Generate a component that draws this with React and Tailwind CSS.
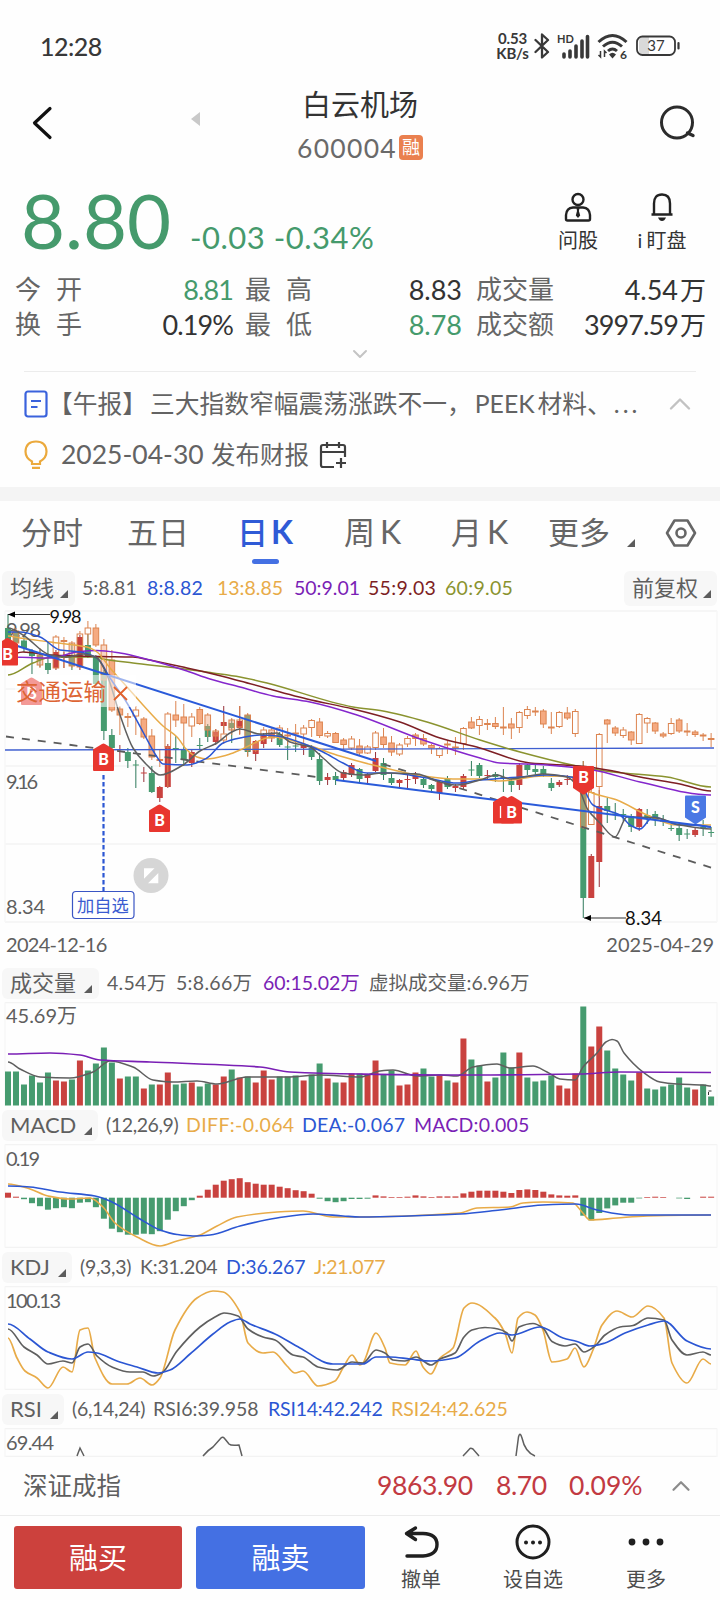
import { ChevronDown, ChevronUp } from 'lucide-react'

const GREEN = '#469b6f'
const RED = '#c9423f'
const PEACH = '#f4a57a'
const PEACH_LINE = '#dc8450'
const GRAY = '#5f5f5f'
const BLUE = '#2b56d3'
const AMBER = '#e8ab48'
const PURPLE = '#7a1fb5'

const candleX = (i) => 8 + i * 7.99

// [high, body top, body bottom, low, up(1) / down(0)]
const candles = [
  [614, 628, 640, 642, 0], [630, 632, 643, 645, 0], [637, 640.5, 648, 652, 0], [649, 651, 656, 674, 0],
  [650, 655, 660, 667, 0], [642, 663, 670, 674, 0], [650, 652, 668, 670, 1], [652, 656, 658, 668, 1],
  [643, 656, 666, 670, 0], [635, 637, 667, 670, 1], [634, 645, 657, 658, 0], [655, 657, 684, 686, 0],
  [670, 672, 731, 740, 0], [729, 735, 748, 749, 0], [745, 749, 750, 762, 1], [748, 752, 761, 768, 0],
  [760, 764.5, 765.5, 788, 0], [767, 772.5, 773.5, 782, 1], [766, 773, 792, 793, 0], [786, 787, 798, 802, 1],
  [744, 746, 787, 788, 1], [736, 748, 749, 763, 0], [745, 749, 760, 766, 0], [750, 752, 763, 767, 1],
  [738, 745, 746, 750, 0], [724, 726, 737, 742, 0], [729, 732, 742, 745, 1], [706, 722, 726, 733, 1],
  [719, 723, 728, 743, 0], [706, 721, 728, 734, 1], [714, 715, 752, 756, 0], [740, 741, 754, 761, 1],
  [733, 735, 744, 748, 1], [732, 734, 738, 742, 1], [732, 734, 745, 747, 0], [739, 746.5, 747.5, 760, 0],
  [737, 745.5, 746.5, 752, 0], [743, 745, 748, 755, 1], [745, 748, 757, 760, 0], [753, 759, 781, 785, 0],
  [773, 777, 780, 785, 1], [772, 776, 780, 785, 0], [770, 772, 778, 781, 1], [763, 765, 775, 777, 1],
  [768, 769, 779, 783, 0], [773, 774, 778, 783, 1], [752, 758, 771, 772, 1], [758, 763, 775, 780, 0],
  [774, 778, 783, 785, 0], [779, 780, 783, 788, 1], [775, 779, 780, 788, 1], [772, 775, 779, 784, 1],
  [777, 779, 785, 788, 0], [784, 785, 789, 793, 0], [780, 782, 793, 800, 1], [776, 779, 787, 789, 0],
  [784, 786, 788, 792, 1], [774, 776, 787, 789, 1], [761, 769.5, 770.5, 776, 0], [763, 765, 776, 778, 0],
  [770, 775, 776, 780, 1], [772, 774, 777, 782, 0], [769, 777, 778, 792, 0], [779, 781, 785, 792, 0],
  [763, 765, 785, 790, 1], [764, 765, 770, 775, 0], [764, 769, 772, 774, 0], [766, 769, 774, 777, 0],
  [778, 783, 788, 791, 0], [780, 782, 785, 787, 1], [775, 779, 780, 785, 1], [774, 777, 780, 784, 1],
  [761, 790, 898, 918, 0], [854, 856, 898, 898, 1], [790, 806, 862, 887, 1], [798, 806, 811, 823, 0],
  [803, 813.5, 814.5, 820, 0], [809, 814, 815, 821, 0], [814, 816, 827, 832, 0], [808, 809, 827, 831, 1],
  [809, 815, 818, 824, 0], [811, 814, 820, 826, 0], [815, 821, 822, 826, 0], [822, 828, 829, 831, 0],
  [826, 828, 835, 841, 0], [829, 833.5, 834.5, 839, 0], [828, 830, 835, 837, 1], [820, 827, 828, 836, 0],
  [827, 832, 833, 837, 0],
]

// index candles drawn over the stock: [i, high, top, bottom, low, hollow]
const overlay = [
  [1, 628, 631, 643, 645, 0], [4, 648, 655, 665, 668, 0], [6, 635, 637, 668, 669, 1], [7, 637, 640.5, 641.5, 668, 0],
  [8, 641, 643, 666, 668, 0], [9, 631, 634, 667, 668, 1], [10, 621, 628, 634, 645, 1], [11, 624, 628, 645, 647, 0],
  [12, 639, 645, 680, 690, 0], [13, 650, 660, 710, 712, 0], [14, 706, 709, 715, 735, 0], [15, 713, 716.5, 717.5, 727, 0],
  [16, 706, 710, 716, 735, 1], [17, 717, 719, 737, 739, 0], [18, 729, 736, 757, 760, 0], [19, 750, 759.5, 760.5, 767, 0],
  [20, 712, 714, 747, 787, 1], [21, 701, 715, 720, 727, 0], [22, 704, 717, 723, 745, 0], [23, 713, 717, 726, 737, 1],
  [24, 707, 709.5, 723.5, 725, 0], [25, 713, 715, 730, 737, 0], [26, 729, 731, 736, 740, 0], [27, 715, 734, 740, 744, 1],
  [28, 718, 720, 730, 735, 0], [29, 706, 720, 727, 735, 1], [30, 713, 715, 750, 757, 0], [31, 740, 743, 750, 752, 0],
  [32, 727, 730, 738, 742, 1], [33, 728, 730, 738, 740, 0], [34, 725, 728, 736, 740, 1], [35, 728, 735, 736, 745, 0],
  [36, 724, 733, 734, 745, 0], [37, 725, 728, 734, 745, 1], [38, 719, 720.5, 727.5, 737, 1], [39, 718, 722, 735.5, 738, 0],
  [40, 731, 733.5, 736, 738, 1], [41, 732, 733.5, 742.5, 743, 0], [42, 738, 740, 744.5, 750, 0], [43, 736, 739, 748, 750, 1],
  [44, 739, 746, 753, 756, 0], [45, 745, 747, 753, 754, 1], [46, 731, 733, 747.5, 750, 1], [47, 728, 737, 744.5, 748, 0],
  [48, 736, 743, 752, 756, 0], [49, 743, 745, 754, 756, 1], [50, 736, 738.5, 744, 747, 1], [51, 733, 735, 738.5, 746, 0],
  [52, 734, 738.5, 744, 746, 0], [53, 744, 745.5, 748, 754, 0], [54, 747, 748.5, 755.5, 758, 1], [55, 741, 744, 745, 754, 0],
  [56, 737, 747, 748, 755, 0], [57, 727, 728.5, 743.5, 750, 1], [58, 717, 722, 728, 729, 0], [59, 716, 719.5, 725.5, 735, 1],
  [60, 719, 723.5, 724.5, 730, 0], [61, 717, 723.5, 726.5, 729, 0], [62, 707, 727, 728, 735, 0], [63, 718, 724, 728, 739, 0],
  [64, 711, 712.5, 727.5, 733, 1], [65, 706, 709.5, 715.5, 719, 1], [66, 707, 711, 712, 716, 0], [67, 709, 711, 724, 728, 0],
  [68, 712, 727, 728, 734, 0], [69, 711, 712.5, 726.5, 728, 1], [70, 707, 713, 718, 720, 0], [71, 709, 711.5, 733.5, 737, 1],
  [72, 761, 790, 827, 829, 0], [73, 785, 792.5, 824.5, 825, 1], [74, 733, 734.5, 786.5, 798, 1], [75, 719, 720, 724, 743, 0],
  [76, 726, 728, 733, 736, 0], [77, 727, 730, 735.5, 738, 1], [78, 731, 732, 740, 745, 0], [79, 713, 714.5, 743.5, 744, 1],
  [80, 717, 718.5, 723, 733, 1], [81, 722, 723, 731, 734, 0], [82, 732, 734, 736, 738, 0], [83, 718, 723.5, 733.5, 735, 1],
  [84, 718, 720, 731, 733, 0], [85, 723, 731, 732, 736, 0], [86, 730, 732, 734.5, 737, 0], [87, 733, 735, 736, 741, 0],
  [88, 733, 738.5, 739.5, 747, 0],
]

// bar heights, negative values are down days
const volumes = [
  -34, -34, -21, -30, -23, -33, 25, 24, -26, 45, -35, -42, -58, -43, 27, -29, -29, 17, -21, 21, 33, -21, -22, 23,
  -19, -22, 21, 29, -36, 28, -29, 23, 35, 26, -29, -29, -30, 25, -31, -42, 27, -23, 23, 32, -32, 31, 45, -31, -35,
  20, 21, 33, -37, -29, 30, -25, 23, 67, -46, -40, 24, -28, -53, -38, 53, -28, -24, -25, -30, 20, 17, 32, -99, 59,
  79, -55, -37, -31, -25, 33, -17, -16, -19, -21, -28, -18, 16, -21, -9,
]

const macd = [
  5, 1, -1.5, -5.5, -8.5, -12, -10.5, -9.5, -10.5, -5, -4.5, -9.5, -21, -31, -34.5, -37, -37, -36, -36.5, -33.5, -22,
  -13.5, -8.5, -2.5, 2, 8, 13, 17, 18.5, 19.5, 15.5, 14, 13, 13, 11, 9.5, 7.5, 6.5, 4, -1, -3.5, -4.5, -3.5, -1.3,
  -1.3, -1, 2.3, 1.3, 0.7, 0.7, 1, 2.3, 1.3, 0.7, 1.3, 1.3, 1.3, 4.3, 6, 7, 7, 7, 6, 4.7, 7.7, 8.3, 7.7, 6, 3.3, 2.3,
  2, 2.3, -18, -22.7, -15.3, -10.7, -7.7, -5, -5, -0.7, 0.7, 1, 0.7, 0, -0.7, -1.3, 0, 1, 1,
]

const ma5 = [[8, 628], [23, 635], [50, 655], [67, 657], [83, 654], [97, 658], [107, 675], [120, 715], [133, 748], [147, 765], [160, 775], [183, 765], [200, 751], [217, 743], [230, 733], [240, 729], [260, 734], [277, 733], [290, 742], [310, 747], [323, 758], [343, 773], [363, 775], [383, 773], [417, 774], [440, 782], [457, 785], [480, 780], [497, 775], [510, 779], [543, 774], [567, 777], [578, 787], [588, 810], [600, 823], [615, 837], [627, 817], [657, 818], [680, 825], [711, 829]]
const ma8 = [[8, 632], [20, 632], [40, 637], [60, 650], [80, 652], [97, 658], [110, 678], [127, 703], [143, 732], [157, 757], [163, 764], [187, 765], [207, 758], [223, 743], [240, 738], [260, 735], [277, 736], [307, 745], [323, 752], [343, 763], [367, 773], [390, 773], [427, 778], [457, 783], [480, 780], [520, 777], [547, 775], [577, 778], [593, 805], [620, 815], [630, 825], [640, 829], [653, 817], [680, 825], [697, 825], [711, 827]]
const ma13 = [[8, 636], [20, 638], [50, 642], [87, 647], [97, 652], [110, 668], [127, 687], [143, 705], [163, 726], [177, 737], [187, 750], [197, 757], [207, 759], [227, 755], [240, 750], [273, 737], [307, 745], [340, 756], [373, 765], [423, 776], [453, 779], [480, 779], [500, 781], [543, 776], [577, 777], [590, 792], [617, 800], [647, 815], [677, 825], [711, 825]]
const ma50 = [[8, 657], [50, 658], [77, 652], [97, 650.5], [120, 653], [150, 660], [187, 671], [210, 679], [240, 687], [273, 696], [310, 702], [357, 715], [423, 740], [480, 758], [500, 763], [547, 765], [593, 770], [640, 782], [711, 795]]
const ma55 = [[8, 655], [23, 652], [50, 655], [100, 656.5], [133, 657], [150, 660], [187, 668], [213, 674], [240, 681], [307, 699], [353, 709], [400, 722], [440, 738], [480, 748], [530, 763], [580, 766], [613, 771], [640, 777], [680, 784], [711, 791]]
const ma60 = [[8, 675], [33, 663], [52, 657], [97, 657], [103, 659], [133, 663], [177, 668], [213, 673], [240, 677], [267, 683], [353, 707], [383, 711], [427, 722], [480, 740], [520, 752], [577, 766], [613, 772], [667, 777], [711, 787]]

const vol5 = [[8, 1062], [20, 1069], [40, 1077], [70, 1078], [93, 1072], [110, 1061], [133, 1067], [153, 1080], [173, 1082], [197, 1081], [217, 1084], [247, 1077], [287, 1077], [320, 1075], [360, 1077], [380, 1071], [393, 1070], [417, 1076], [440, 1075], [457, 1076], [473, 1067], [497, 1064], [510, 1068], [533, 1066], [547, 1072], [560, 1079], [575, 1080], [583, 1067], [597, 1053], [606, 1042], [612, 1039.5], [617, 1041], [624, 1053], [643, 1072], [660, 1082], [677, 1084], [703, 1085], [711, 1086]]
const vol60 = [[8, 1054], [50, 1053], [80, 1055], [100, 1060], [150, 1062], [260, 1067], [290, 1072], [360, 1074], [460, 1075], [490, 1075], [580, 1074], [620, 1072], [711, 1072.5]]

const diff = [[8, 1184], [30, 1189], [48, 1196], [70, 1199], [90, 1198], [103, 1207], [115, 1223], [137, 1237], [160, 1246], [177, 1241], [200, 1235], [217, 1226], [237, 1217], [277, 1212], [303, 1211], [333, 1217], [360, 1217], [460, 1213], [477, 1208], [510, 1207], [523, 1203], [543, 1202], [573, 1203], [582, 1212], [590, 1220], [617, 1218], [647, 1216], [711, 1215]]
const dea = [[8, 1186], [30, 1187], [60, 1192], [95, 1196], [110, 1201], [140, 1219], [160, 1230], [177, 1234.5], [193, 1236], [210, 1235], [240, 1226], [277, 1218], [313, 1214], [343, 1216], [360, 1217], [460, 1214], [500, 1210], [543, 1205], [576, 1204], [597, 1210], [630, 1215], [711, 1215]]

const kLine = [[8, 1329], [24, 1347], [37, 1355], [48, 1364], [63, 1361], [72, 1363], [80, 1347], [88, 1344], [97, 1356], [112, 1367], [130, 1372], [143, 1372], [153, 1376], [162, 1373], [177, 1351], [200, 1327], [215, 1317], [224, 1313], [238, 1316], [248, 1329], [263, 1337], [275, 1340], [293, 1355], [303, 1357], [318, 1367], [337, 1370], [352, 1362], [363, 1363], [376, 1350], [385, 1353], [393, 1360], [405, 1361], [416, 1357], [431, 1365], [440, 1359], [455, 1353], [464, 1337], [472, 1330], [485, 1327.5], [498, 1329], [507, 1333], [512, 1341], [519, 1327], [533, 1323.5], [543, 1328], [552, 1341.5], [565, 1346], [575, 1344], [584, 1352], [595, 1346], [605, 1335], [620, 1327], [633, 1325.5], [648, 1318], [664, 1320], [672, 1340], [687, 1355], [703, 1352], [711, 1355]]
const dLine = [[8, 1324], [30, 1339], [48, 1352], [72, 1359], [88, 1352], [97, 1353], [117, 1361], [137, 1367], [158, 1373], [170, 1370], [190, 1354], [213, 1334], [230, 1322], [240, 1319], [250, 1324], [275, 1334], [300, 1348], [333, 1364], [363, 1364], [376, 1357], [390, 1357], [410, 1359], [431, 1361], [455, 1358], [480, 1341], [500, 1333], [512, 1335], [540, 1327], [563, 1338], [577, 1341.5], [590, 1346], [605, 1343], [625, 1333], [648, 1325], [664, 1321], [687, 1341], [711, 1349]]
const jLine = [[8, 1338], [17, 1358], [25, 1371], [37, 1378], [48, 1388], [63, 1367], [72, 1372], [80, 1330], [88, 1328], [95, 1358], [112, 1384], [127, 1384], [140, 1378], [152, 1385], [160, 1378], [175, 1330], [197, 1298], [213, 1291], [223, 1292], [240, 1312], [248, 1343], [263, 1353], [273, 1352], [287, 1366], [295, 1373], [303, 1371], [318, 1386], [335, 1381], [343, 1368], [352, 1355], [360, 1365], [363, 1363], [376, 1333], [385, 1348], [390, 1363], [405, 1365], [416, 1351], [423, 1367], [431, 1374], [440, 1358], [453, 1348], [464, 1308], [472, 1303], [495, 1318], [505, 1333], [512, 1353], [518, 1318], [527, 1312], [535, 1315], [543, 1330], [552, 1362], [567, 1359], [575, 1348], [584, 1367], [593, 1350], [602, 1325], [617, 1311], [632, 1317], [648, 1306], [664, 1318], [672, 1363], [687, 1383], [703, 1359], [711, 1364]]

// monotone-ish curve: handles stay within each segment
const curve = (pts) => {
  let d = `M${pts[0][0]} ${pts[0][1]}`
  const slope = (i) => {
    if (i === 0 || i === pts.length - 1) return 0
    const a = (pts[i][1] - pts[i - 1][1]) / (pts[i][0] - pts[i - 1][0])
    const b = (pts[i + 1][1] - pts[i][1]) / (pts[i + 1][0] - pts[i][0])
    return a * b <= 0 ? 0 : (2 * a * b) / (a + b)
  }
  for (let i = 1; i < pts.length; i++) {
    const [x0, y0] = pts[i - 1]
    const [x1, y1] = pts[i]
    const h = (x1 - x0) / 3
    d += `C${x0 + h} ${y0 + h * slope(i - 1)} ${x1 - h} ${y1 - h * slope(i)} ${x1} ${y1}`
  }
  return d
}

const Line = ({ pts, color, width = 1.5 }) => (
  <path d={curve(pts)} fill="none" stroke={color} strokeWidth={width} strokeLinejoin="round" />
)

const Grid = ({ top, bottom, lines }) => (
  <g strokeWidth="1.5">
    {lines.map((y) => <path key={y} d={`M5 ${y}H717`} stroke="#f3f3f3" />)}
    <path d={`M5 ${top}V${bottom}M717 ${top}V${bottom}`} stroke="#f7f7f7" />
  </g>
)

const AxisLabel = ({ y, width, children }) => (
  <text x="6" y={y} fontSize="20" fill={GRAY} textLength={width}>{children}</text>
)

const Corner = ({ className = '' }) => (
  <svg viewBox="0 0 8 8" className={`w-2 h-2 shrink-0 ${className}`}>
    <path d="M8 0V8H0Z" fill="#5c5c5c" />
  </svg>
)

const IndicatorButton = ({ children, className }) => (
  <div className={`h-[31px] shrink-0 rounded-md bg-[#f7f7f7] pl-2 pb-[2px] flex items-center text-[#5f5f5f] text-[22px] whitespace-nowrap ${className}`}>
    {children}
  </div>
)

const Value = ({ children, className }) => (
  <span className={`shrink-0 whitespace-nowrap text-[19.5px] ${className}`}>{children}</span>
)

const Pin = ({ x, y, letter, down, color = '#e8362f', opacity = 1 }) => (
  <g transform={`translate(${x} ${y})`} opacity={opacity}>
    <path
      d={down ? 'M-9.500 0H9.500Q10.500 0 10.500 1V22L1.500 28Q0 29 -1.500 28L-10.500 22V1Q-10.500 0 -9.500 0Z' : 'M-10.500 6L-1.500 .5Q0 -.3 1.500 .5L10.500 6V26.500Q10.500 27.500 9.500 27.500H-9.500Q-10.500 27.500 -10.500 26.500Z'}
      fill={color}
    />
    {letter && <text y={down ? 17 : 21.5} textAnchor="middle" fontSize="16" fontWeight="900" fill="#fff">{letter}</text>}
  </g>
)

const StatusBar = () => (
  <div className="h-[80px] pt-[30px] pl-[40px] pr-[40px] flex items-start justify-between text-[#383838]">
    <div className="text-[25px] leading-8 font-medium tracking-[-0.5px]">12:28</div>
    <div className="flex items-center h-8">
      <div className="w-[33px] text-[15px] leading-[15.5px] font-bold whitespace-nowrap text-center tracking-[-0.2px]">
        <div>0.53</div>
        <div>KB/s</div>
      </div>
      <svg viewBox="0 0 16 26" className="ml-[5px] w-4 h-[26px]">
        <path d="M1.500 7L14 19L8 24.500V1.500L14 7L1.500 19" fill="none" stroke="#383838" strokeWidth="2.300" strokeLinejoin="round" strokeLinecap="round" />
      </svg>
      <svg viewBox="0 0 34 28" className="ml-[7px] w-[34px] h-7">
        <text x="0" y="11" fontSize="11" fontWeight="700" fill="#383838">HD</text>
        <path d="M7 25v-3M13 25v-6M19 25v-11M25 25v-16M30.500 25v-20.500" stroke="#383838" strokeWidth="3.600" strokeLinecap="round" />
      </svg>
      <svg viewBox="0 0 32 28" className="ml-[6px] w-8 h-7">
        <g fill="none" stroke="#383838" strokeWidth="3">
          <path d="M1.500 10Q15.500 -3 29.500 10M6 14.500Q15.500 6 25 14.500M11 19Q15.500 15 20 19" />
        </g>
        <path d="M12 22.500Q15.500 19 19 22.500L15.500 26.500Z" fill="#383838" />
        <path d="M3.500 19v6l-2-2M7.500 25v-6l2 2" stroke="#383838" strokeWidth="1.500" fill="none" />
        <text x="23" y="26.500" fontSize="12" fontWeight="700" fill="#383838">6</text>
      </svg>
      <svg viewBox="0 0 44 22" className="ml-[7px] w-11 h-[22px]">
        <path d="M7 2h6v18H7Q3 20 3 15V7Q3 2 7 2Z" fill="#d9d9d9" />
        <rect x="1" y="1.500" width="38" height="18.500" rx="5.500" fill="none" stroke="#383838" strokeWidth="1.800" />
        <path d="M42.500 8v5.500" stroke="#383838" strokeWidth="2.200" strokeLinecap="round" />
        <text x="20" y="16" fontSize="15" textAnchor="middle" fill="#383838">37</text>
      </svg>
    </div>
  </div>
)

const Header = () => (
  <div className="h-[95px] pl-[31px] pr-[23px] flex">
    <svg viewBox="0 0 22 36" className="mt-[25px] w-[22px] h-9">
      <path d="M19 3.500L3.500 18L19 32.500" fill="none" stroke="#111" strokeWidth="3.200" strokeLinecap="round" strokeLinejoin="round" />
    </svg>
    <svg viewBox="0 0 9 14" className="mt-[32px] ml-[138px] w-[9px] h-3.5">
      <path d="M9 0V14L0 7Z" fill="#c9c9c9" />
    </svg>
    <div className="ml-[60px] w-[200px] flex flex-col items-center">
      <div className="mt-[4px] h-[42px] leading-[42px] text-[29px] text-[#333] whitespace-nowrap">白云机场</div>
      <div className="h-11 flex items-center">
        <span className="text-[26.5px] leading-10 tracking-[1.3px] text-[#6a6a6a]">600004</span>
        <span className="ml-[2px] mb-[2px] w-6 h-[25px] rounded-[4px] bg-[#ea804f] text-white text-[18px] leading-[24px] text-center">融</span>
      </div>
    </div>
    <svg viewBox="0 0 38 36" className="ml-auto mt-[25px] w-[38px] h-9">
      <circle cx="18" cy="17.500" r="15.500" fill="none" stroke="#2c2c2c" strokeWidth="3" />
      <path d="M28.500 28L34 30.500" stroke="#2c2c2c" strokeWidth="3.400" strokeLinecap="round" />
    </svg>
  </div>
)

const Quote = () => (
  <div className="h-[95px] pl-[21px] pr-[31px] flex">
    <div className="w-[169px] text-[76px] leading-[90px] text-[#459a6c]">8.80</div>
    <div className="mt-[42px] text-[31px] leading-10 text-[#459a6c] whitespace-nowrap tracking-[0.5px]">-0.03 -0.34%</div>
    <div className="ml-auto mt-[17px] w-[46px] flex flex-col items-center">
      <svg viewBox="0 0 28 30" className="w-7 h-[30px]" fill="none" stroke="#222" strokeWidth="2.400">
        <circle cx="14" cy="7.500" r="5.500" />
        <path d="M9 15.500H19Q25.500 16 26 23V27Q26 28.500 24.500 28.500H3.500Q2 28.500 2 27V23Q2.500 16 9 15.500Z" />
        <path d="M12.500 16h3l-.6 3l1.300 4.500L14 26l-2.200-2.500L13 19Z" fill="#222" stroke="none" />
      </svg>
      <div className="mt-[4px] text-[20px] leading-7 text-[#333] whitespace-nowrap">问股</div>
    </div>
    <div className="ml-[34px] mt-[17px] w-[54px] flex flex-col items-center">
      <svg viewBox="0 0 24 30" className="w-6 h-[30px]" fill="none" stroke="#222" strokeWidth="2.400">
        <path d="M4 22V11.500Q4 2.500 12 2.500T20 11.500V22M1.500 22.500H22.500" />
        <path d="M8 25.500H16Q14.500 29 12 29T8 25.500Z" fill="#222" stroke="none" />
      </svg>
      <div className="mt-[4px] text-[20px] leading-7 text-[#333] whitespace-nowrap"><span className="mr-[4px]">i</span>盯盘</div>
    </div>
  </div>
)

const Stat = ({ label, value, unit, green, tight, className }) => (
  <div className={`flex items-center justify-between shrink-0 ${className}`}>
    <span className="flex text-[#666] text-[26px]">{label}</span>
    <span className={`text-[27px] ${green ? 'text-[#459a6c]' : 'text-[#333]'} ${tight ? 'tracking-[-0.9px]' : ''}`}>
      {value}
      {unit && <span className="text-[26px] ml-[2px] tracking-normal">{unit}</span>}
    </span>
  </div>
)

const Stats = () => (
  <div className="h-[101px] pl-[15px] pt-[2px]">
    <div className="h-[35px] flex items-center leading-[35px]">
      <Stat className="w-[218px]" label={<><span className="mr-[15px]">今</span><span>开</span></>} value="8.81" green tight />
      <Stat className="w-[217px] ml-3" label={<><span className="mr-[15px]">最</span><span>高</span></>} value="8.83" />
      <Stat className="w-[230px] ml-[14px]" label="成交量" value="4.54" unit="万" />
    </div>
    <div className="h-[35px] flex items-center leading-[35px]">
      <Stat className="w-[218px]" label={<><span className="mr-[15px]">换</span><span>手</span></>} value="0.19%" tight />
      <Stat className="w-[217px] ml-3" label={<><span className="mr-[15px]">最</span><span>低</span></>} value="8.78" green />
      <Stat className="w-[230px] ml-[14px]" label="成交额" value="3997.59" unit="万" tight />
    </div>
    <ChevronDown className="ml-[332px] w-[26px] h-6" color="#c4c4c4" strokeWidth={2} />
  </div>
)

const News = () => (
  <div className="mx-6 h-[116px] border-t border-[#ececec] text-[#636363]">
    <div className="h-[65px] pb-[2px] flex items-center">
      <svg viewBox="0 0 24 28" className="w-6 h-7 shrink-0" fill="none" stroke="#3a62dc" strokeWidth="2.200">
        <rect x="1.500" y="1.500" width="21" height="25" rx="2.500" />
        <path d="M7 11h10M7 17h6.500" />
      </svg>
      <div className="w-[600px] text-[24.75px] leading-9 whitespace-nowrap">
        【午报】<span className="ml-[3px]">三大指数窄幅震荡涨跌不一，</span><span className="ml-[3px]">PEEK</span><span className="ml-[3px]">材料、</span><span className="ml-[2px] tracking-[3px]">...</span>
      </div>
      <ChevronUp className="ml-auto -mr-[2px] w-9 h-9 shrink-0" color="#c2c2c2" strokeWidth={1.6} />
    </div>
    <div className="h-[36px] flex items-center">
      <svg viewBox="0 0 24 30" className="w-6 h-[30px]" fill="none" stroke="#eba93c" strokeWidth="2.200">
        <path d="M8 24V21.500Q1.500 18 1.500 11.500Q2 1.500 12 1.500T22.500 11.500Q22.500 18 16 21.500V24ZM8 27.800h8" />
      </svg>
      <span className="ml-[13px] w-[150px] text-[26.5px] whitespace-nowrap">2025-04-30</span>
      <span className="w-[108px] text-[24.5px] whitespace-nowrap">发布财报</span>
      <svg viewBox="0 0 28 28" className="w-7 h-7" fill="none" stroke="#3f3f3f" strokeWidth="2.200">
        <path d="M15 26H4Q2 26 2 24V6Q2 4 4 4H24Q26 4 26 6V16M2 11H26M8 1V7M20 1V7M22 17V27M17 22H27" />
      </svg>
    </div>
  </div>
)

const Tabs = () => (
  <div className="h-[67px] pl-[21px] flex leading-[62px] text-[31px] text-[#666] whitespace-nowrap">
    <div className="w-[106px]">分时</div>
    <div className="w-[111px]">五日</div>
    <div className="w-[54px] flex flex-col items-center text-[#2f5ad6] font-medium h-16">
      <div className="h-[58px] flex gap-[3px]"><span>日</span><span className="font-bold text-[32px]">K</span></div>
      <div className="w-[27px] h-[5px] rounded-full bg-[#4470e3] shrink-0" />
    </div>
    <div className="ml-[52px] w-[107px] flex gap-[5px]"><span>周</span><span className="text-[32px]">K</span></div>
    <div className="w-[97px] flex gap-[5px]"><span>月</span><span className="text-[32px]">K</span></div>
    <div className="w-[79px]">更多</div>
    <Corner className="mt-[38px]" />
    <svg viewBox="0 0 32 30" className="ml-[30px] mt-[17px] w-8 h-[30px]" fill="none" stroke="#666" strokeWidth="2.600">
      <path d="M9.500 2.500H22.500L30 15L22.500 27.500H9.500L2 15Z" strokeLinejoin="round" />
      <circle cx="16" cy="15" r="4.500" />
    </svg>
  </div>
)

const PriceChart = () => (
  <>
    <div className="h-[40px] pl-[2px] pr-[3px] flex items-center">
      <IndicatorButton className="w-[73px] h-[35px]">均线<Corner className="mt-[14px] ml-[6px]" /></IndicatorButton>
      <Value className="ml-[7px] w-[65px] text-[#5f5f5f]">5:8.81</Value>
      <Value className="w-[70px] text-[#2b56d3] tracking-[0.2px]">8:8.82</Value>
      <Value className="w-[77px] text-[#e8ab48]">13:8.85</Value>
      <Value className="w-[74px] text-[#7a1fb5]">50:9.01</Value>
      <Value className="w-[77px] text-[#7d1f24] tracking-[0.3px]">55:9.03</Value>
      <Value className="w-[70px] text-[#8a932f] tracking-[0.3px]">60:9.05</Value>
      <IndicatorButton className="ml-auto w-[93px] h-[35px]">前复权<Corner className="mt-[14px] ml-[5px]" /></IndicatorButton>
    </div>
    <svg viewBox="0 608 720 318" className="block w-[720px] h-[318px]">
      <Grid top={611} bottom={922} lines={[611, 689, 766, 844, 922]} />
      <AxisLabel y={636.5} width={35}>9.98</AxisLabel>
      <AxisLabel y={788.5} width={32}>9.16</AxisLabel>
      <AxisLabel y={913.5} width={39}>8.34</AxisLabel>
      {candles.map(([high, top, bottom, low, up], i) => (
        <g key={i}>
          <path d={`M${candleX(i)} ${high}V${low}`} stroke={up ? '#963039' : '#2f7a5c'} strokeWidth="1" />
          <rect x={candleX(i) - 3} y={top} width="6" height={bottom - top} fill={up ? RED : GREEN} />
        </g>
      ))}
      {overlay.map(([i, high, top, bottom, low, hollow]) => (
        <g key={i} stroke={PEACH_LINE} strokeWidth="1">
          <path d={`M${candleX(i)} ${high}V${top}M${candleX(i)} ${bottom}V${low}`} />
          <rect x={candleX(i) - 2.8} y={top} width="5.600" height={bottom - top} fill={hollow ? 'none' : PEACH} fillOpacity={candles[i][1] < bottom ? 0.45 : 0.95} />
        </g>
      ))}
      <path d="M5 750L714 748" stroke="#3f5fd0" strokeWidth="1.300" />
      <path d="M6 736.500L317 777M383 764L717 869.500" stroke="#5c5c5c" strokeWidth="1.800" strokeDasharray="8 8" />
      <Line pts={ma60} color="#8a932f" />
      <Line pts={ma55} color="#7d1f24" />
      <Line pts={ma50} color="#8426cc" />
      <Line pts={ma13} color={AMBER} />
      <Line pts={ma8} color={BLUE} />
      <Line pts={ma5} color={GRAY} />
      <path d="M8 643L376 761M336 780L711 827" stroke="#2a5ad9" strokeWidth="2" />

      <path d="M8 614.500H50M584 918H626" stroke="#333" strokeWidth="1" />
      <path d="M8 614.500L15 611.500V617.500ZM584 918L591 915V921Z" fill="#000" />
      <text x="49.500" y="623" fontSize="18" fill="#111" textLength="32">9.98</text>
      <text x="625" y="925" fontSize="18.500" fill="#111" textLength="37">8.34</text>

      <rect x="15" y="675" width="121" height="32" fill="#fff" opacity=".55" />
      <Pin x={31.5} y={677.5} letter="B" opacity={0.5} />
      <text x="16" y="700" fontSize="22.500" fill="#dd6434">交通运输</text>
      <path d="M114 687L127 700M127 687L114 700" stroke="#e2622d" strokeWidth="1.800" />

      <svg x="2" y="608" width="718" height="318" viewBox="2 608 718 318">
        <Pin x={7.5} y={638} letter="B" />
      </svg>
      <Pin x={103.5} y={743.5} letter="B" />
      <Pin x={159.5} y={804.5} letter="B" />
      <Pin x={503.5} y={796} />
      <Pin x={511.5} y={796} letter="B" />
      <path d="M500.500 806V818" stroke="#fff" strokeWidth="1.300" />
      <Pin x={583.5} y={766} letter="B" down />
      <Pin x={695.5} y={795.5} letter="S" down color="#4a78e4" />

      <path d="M103.500 775V891" stroke="#2b56d3" strokeWidth="2.200" strokeDasharray="4.500 2.500" />
      <rect x="72.500" y="891.500" width="61.500" height="27" rx="3.500" fill="#fff" stroke="#3a55c4" strokeWidth="1.200" />
      <text x="77" y="911.500" fontSize="17.300" fill="#3a5bd0">加自选</text>
      <circle cx="151" cy="875.500" r="17.500" fill="#d6d6d6" />
      <path d="M144 868.300H154.500L144 878.800ZM158.300 873V883.300H148Z" fill="#fff" />
    </svg>
    <div className="h-[38px] pb-[3px] px-[6px] flex items-center justify-between text-[20px] text-[#5f5f5f]">
      <span className="tracking-[-0.7px]">2024-12-16</span>
      <span>2025-04-29</span>
    </div>
  </>
)

const Volume = () => (
  <>
    <div className="h-[38px] pt-[4px] pl-[2px] flex items-start leading-[29px]">
      <IndicatorButton className="w-[97px]">成交量<Corner className="mt-[13px] ml-[8px]" /></IndicatorButton>
      <Value className="ml-[8px] w-[69px] text-[#5f5f5f] tracking-[0.3px]">4.54万</Value>
      <Value className="w-[87px] text-[#5f5f5f] tracking-[0.3px]">5:8.66万</Value>
      <Value className="w-[106px] text-[#7a1fb5]">60:15.02万</Value>
      <Value className="text-[#5f5f5f]">虚拟成交量:6.96万</Value>
    </div>
    <svg viewBox="0 1002 720 104" className="block w-[720px] h-[104px]">
      <Grid top={1002.5} bottom={1106} lines={[1002.5]} />
      <AxisLabel y={1023} width={71}>45.69万</AxisLabel>
      {volumes.map((v, i) => (
        <rect key={i} x={candleX(i) - 3} y={1105.5 - Math.abs(v)} width="6" height={Math.abs(v)} fill={v > 0 ? RED : GREEN} />
      ))}
      <Line pts={vol5} color={GRAY} />
      <Line pts={vol60} color={PURPLE} width={1.7} />
      <path d="M708.500 1091h4M708.500 1092v5" stroke="#333" strokeWidth="1" strokeDasharray="3 2" />
    </svg>
  </>
)

const Macd = () => (
  <>
    <div className="h-[38px] pt-[4px] pl-[2px] flex items-start leading-[29px]">
      <IndicatorButton className="w-[96px]">MACD<Corner className="mt-[13px] ml-[8px]" /></IndicatorButton>
      <Value className="ml-[8px] w-[80px] text-[#5f5f5f] tracking-[-0.4px]">(12,26,9)</Value>
      <Value className="w-[116px] text-[#e8ab48] tracking-[0.4px]">DIFF:-0.064</Value>
      <Value className="w-[112px] text-[#2b56d3] tracking-[0.2px]">DEA:-0.067</Value>
      <Value className="text-[#7a1fb5] tracking-[0.2px]">MACD:0.005</Value>
    </div>
    <svg viewBox="0 1144 720 104" className="block w-[720px] h-[104px]">
      <Grid top={1144.5} bottom={1247.5} lines={[1144.5, 1247.5]} />
      <AxisLabel y={1165.5} width={34}>0.19</AxisLabel>
      {macd.map((v, i) => (
        <rect key={i} x={candleX(i) - 3} y={v > 0 ? 1197.7 - v : 1197.7} width="6" height={Math.abs(v)} fill={v > 0 ? RED : GREEN} />
      ))}
      <Line pts={diff} color={AMBER} width={1.6} />
      <Line pts={dea} color={BLUE} width={1.6} />
    </svg>
  </>
)

const Kdj = () => (
  <>
    <div className="h-[38px] pt-[4px] pl-[2px] flex items-start leading-[29px]">
      <IndicatorButton className="w-[70px]">KDJ<Corner className="mt-[13px] ml-[8px]" /></IndicatorButton>
      <Value className="ml-[8px] w-[60px] text-[#5f5f5f] tracking-[-0.3px]">(9,3,3)</Value>
      <Value className="w-[86px] text-[#5f5f5f] tracking-[-0.2px]">K:31.204</Value>
      <Value className="w-[88px] text-[#2b56d3] tracking-[-0.2px]">D:36.267</Value>
      <Value className="text-[#e8ab48] tracking-[-0.4px]">J:21.077</Value>
    </div>
    <svg viewBox="0 1286 720 104" className="block w-[720px] h-[104px]">
      <Grid top={1286.5} bottom={1389.5} lines={[1286.5, 1389.5]} />
      <AxisLabel y={1308} width={55}>100.13</AxisLabel>
      <Line pts={jLine} color={AMBER} width={1.7} />
      <Line pts={kLine} color={GRAY} width={1.7} />
      <Line pts={dLine} color={BLUE} width={1.7} />
    </svg>
  </>
)

const Rsi = () => (
  <>
    <div className="h-[38px] pt-[4px] pl-[2px] flex items-start leading-[29px]">
      <IndicatorButton className="w-[62px]">RSI<Corner className="mt-[13px] ml-[8px]" /></IndicatorButton>
      <Value className="ml-[8px] w-[81px] text-[#5f5f5f] tracking-[-0.3px]">(6,14,24)</Value>
      <Value className="w-[115px] text-[#5f5f5f]">RSI6:39.958</Value>
      <Value className="w-[123px] text-[#2b56d3] tracking-[-0.2px]">RSI14:42.242</Value>
      <Value className="text-[#e8ab48]">RSI24:42.625</Value>
    </div>
    <svg viewBox="0 1428 720 29" className="block w-[720px] h-[29px]">
      <Grid top={1428.5} bottom={1457} lines={[1428.5, 1456.5]} />
      <AxisLabel y={1449.5} width={48}>69.44</AxisLabel>
      <path
        d="M77 1456L80 1448L84 1456M203 1456Q208 1450 213 1447L221 1438Q223 1436 225 1439L229 1444Q231 1446 239 1445L242 1456M463 1456Q466 1453 470 1448.500Q471 1448 473 1449L479 1456M516 1456L518.500 1437Q520 1431 522 1438Q525 1452 535 1456"
        fill="none" stroke={GRAY} strokeWidth="1.500"
      />
    </svg>
  </>
)

const IndexBar = () => (
  <div className="h-[58px] pl-[23px] pr-[24px] flex items-center text-[26.5px] text-[#c23a42] whitespace-nowrap">
    <span className="w-[354px] text-[24.5px] text-[#5f5f5f]">深证成指</span>
    <span className="w-[119px] tracking-[-0.4px]">9863.90</span>
    <span className="w-[73px] tracking-[-0.4px]">8.70</span>
    <span>0.09%</span>
    <ChevronUp className="ml-auto w-[30px] h-[34px]" color="#8c8c8c" strokeWidth={1.8} />
  </div>
)

const Action = ({ label, children, className }) => (
  <div className={`flex flex-col items-center pt-[8px] text-[#4c4c4c] ${className}`}>
    {children}
    <div className="mt-[3px] text-[20px] leading-7 whitespace-nowrap">{label}</div>
  </div>
)

const BottomBar = () => (
  <div className="h-[85px] border-t border-[#ececec] flex pl-[14px]">
    <button className="mt-[10px] w-[168px] h-[63px] rounded-[3px] bg-[#cc413d] text-white text-[29px]">融买</button>
    <button className="mt-[10px] ml-[14px] w-[169px] h-[63px] rounded-[3px] bg-[#4470e3] text-white text-[29px]">融卖</button>
    <Action label="撤单" className="ml-[16px] w-20">
      <svg viewBox="0 0 40 38" className="w-10 h-[38px]" fill="none" stroke="#1f1f1f" strokeWidth="3.400" strokeLinecap="round" strokeLinejoin="round">
        <path d="M14.500 4L5.500 9.500L14.500 15.500M6 9.500H22Q36 10 36 20.500T22 32H6" />
      </svg>
    </Action>
    <Action label="设自选" className="ml-[32px] w-20">
      <svg viewBox="0 0 40 38" className="w-10 h-[38px]">
        <circle cx="20" cy="18" r="16" fill="none" stroke="#1f1f1f" strokeWidth="3" />
        <path d="M13 18.500h.01M20 18.500h.01M27 18.500h.01" stroke="#1f1f1f" strokeWidth="4" strokeLinecap="round" />
      </svg>
    </Action>
    <Action label="更多" className="ml-[33px] w-20">
      <svg viewBox="0 0 40 38" className="w-10 h-[38px]">
        <path d="M6 18h.01M20 18h.01M34 18h.01" stroke="#1f1f1f" strokeWidth="6.800" strokeLinecap="round" />
      </svg>
    </Action>
  </div>
)

const App = () => (
  <div className="w-[720px] h-[1600px] overflow-hidden bg-[#fefefe] font-['Lato','Noto_Sans_CJK_SC',sans-serif]">
    <StatusBar />
    <Header />
    <Quote />
    <Stats />
    <News />
    <div className="h-[14px] bg-[#f4f4f4]" />
    <Tabs />
    <PriceChart />
    <Volume />
    <Macd />
    <Kdj />
    <Rsi />
    <IndexBar />
    <BottomBar />
  </div>
)

export default App
